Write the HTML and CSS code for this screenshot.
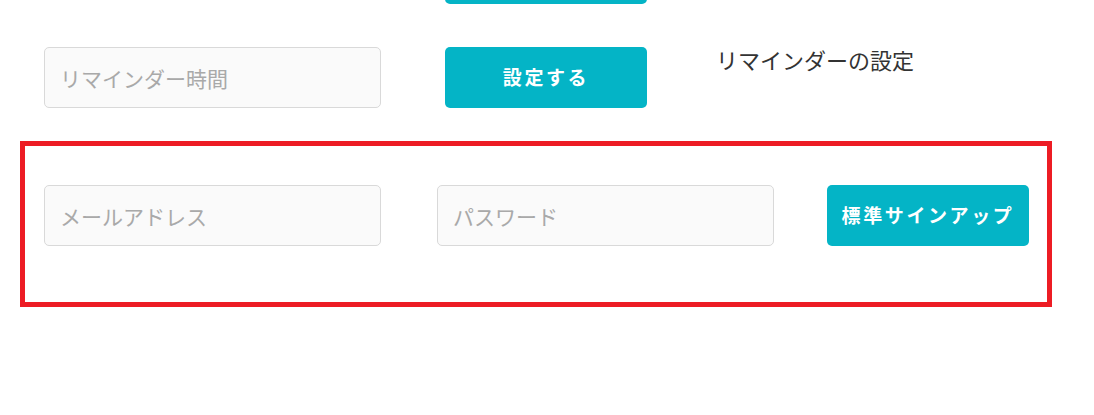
FILE: index.html
```html
<!DOCTYPE html>
<html lang="ja">
<head>
<meta charset="utf-8">
<link rel="stylesheet" href="styles.css">
</head>
<body>
<div class="page">
  <div class="row row-top">
    <div class="spacer"></div>
    <button class="btn" aria-label="送信"></button>
  </div>
  <div class="row row-reminder">
    <input class="field" type="text" placeholder="リマインダー時間">
    <button class="btn">設定する</button>
    <div class="label">リマインダーの設定</div>
  </div>
  <div class="signup">
    <input class="field" type="email" placeholder="メールアドレス">
    <input class="field" type="password" placeholder="パスワード">
    <button class="btn">標準サインアップ</button>
  </div>
</div>
</body>
</html>
```
FILE: styles.css
```css
html, body {
  margin: 0;
  padding: 0;
  background: #ffffff;
}
body {
  font-family: "Noto Sans CJK JP", "Noto Sans", sans-serif;
  overflow: hidden;
}
.page {
  padding: 0 20px;
  margin-top: -57px;
}
.row {
  display: flex;
  align-items: flex-start;
  padding-left: 24px;
}
.row-top {
  height: 61px;
}
.spacer {
  width: 337px;
  flex: none;
  margin-right: 64px;
}
.row-reminder {
  margin-top: 43px;
}
.row-reminder .btn {
  margin-left: 64px;
}
.field {
  box-sizing: border-box;
  width: 337px;
  height: 61px;
  flex: none;
  background: #fafafa;
  border: 1px solid #d9d9d9;
  border-radius: 5px;
  padding: 0 15px;
  font-family: "Noto Sans CJK JP", "Noto Sans", sans-serif;
  font-size: 21px;
  color: #333;
  outline: none;
}
.field::placeholder {
  color: #a9a9a9;
}
.btn {
  box-sizing: border-box;
  width: 202px;
  height: 61px;
  flex: none;
  background: #04b4c6;
  border: none;
  border-radius: 5px;
  color: #ffffff;
  font-family: "Noto Sans CJK JP", "Noto Sans", sans-serif;
  font-weight: 700;
  font-size: 19px;
  letter-spacing: 2.6px;
  padding: 0 0 3px;
}
.label {
  margin-left: 69px;
  font-size: 22px;
  line-height: 24px;
  color: #333;
}
.signup {
  margin-top: 33px;
  box-sizing: border-box;
  width: 1032px;
  height: 166px;
  border: 5px solid #ed1c24;
  padding: 39px 18px 0 19px;
  display: flex;
  align-items: flex-start;
}
.signup .field + .field {
  margin-left: 56px;
}
.signup .btn {
  margin-left: 53px;
}
```
